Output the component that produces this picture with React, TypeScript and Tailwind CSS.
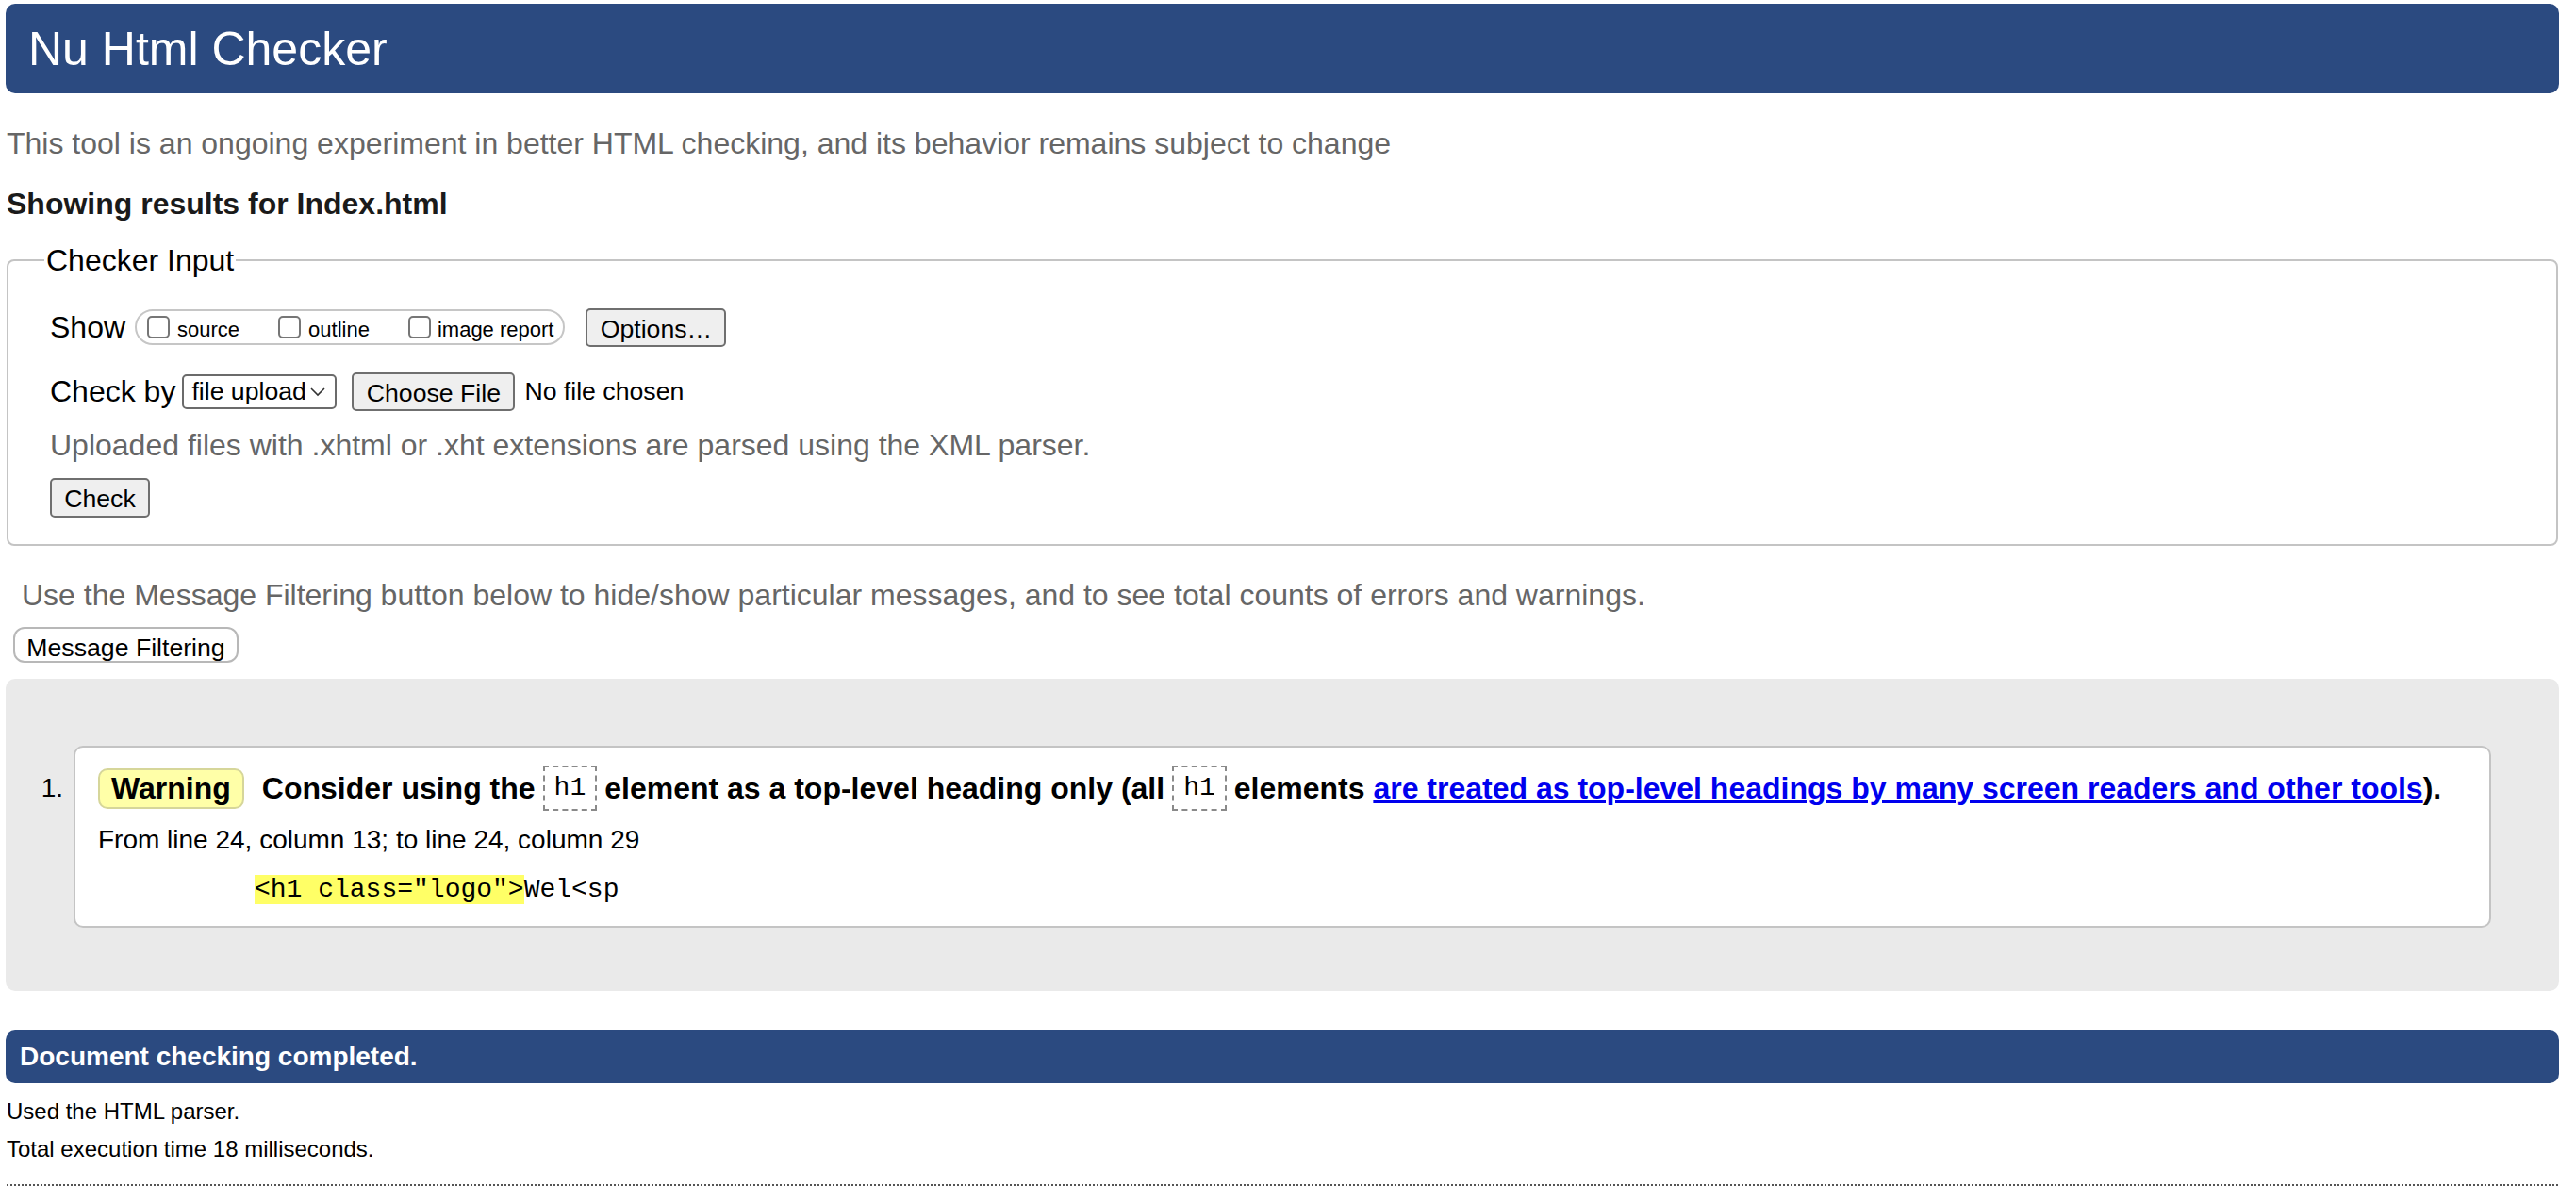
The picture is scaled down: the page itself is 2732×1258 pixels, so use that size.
import React from 'react';

// Small checkbox drawn as a box, like the native mac control
function Box() {
  return <span className="inline-block h-[24px] w-[24px] rounded-[5px] border-2 border-[#767676] bg-white" />;
}

function CodeBox({ children }: { children: React.ReactNode }) {
  return (
    <span className="ml-[8px] inline-flex h-[48px] items-center border-2 border-dashed border-[#8a8a8a] px-[10px] font-['Liberation_Mono','Courier_New',monospace] text-[28px] font-normal">
      {children}
    </span>
  );
}

export default function App() {
  return (
    <div className="min-h-screen bg-white font-['Liberation_Sans',Arial,Helvetica,sans-serif] text-black">
      <div className="ml-[6px] w-[2708px] pt-[4px]">
        {/* Title bar */}
        <header className="flex h-[95px] items-center rounded-[10px] bg-[#2b4a80] pl-[24px]">
          <h1 className="text-[50px] leading-none text-white">Nu Html Checker</h1>
        </header>

        <p className="mt-[33px] pl-[1px] text-[32px] leading-[40px] text-[#666]">
          This tool is an ongoing experiment in better HTML checking, and its behavior remains subject to change
        </p>
        <p className="mt-[24px] pl-[1px] text-[32px] font-bold leading-[40px] text-[#1a1a1a]">
          Showing results for Index.html
        </p>

        {/* Checker input form */}
        <fieldset className="mx-[1px] mt-[20px] rounded-[8px] border-2 border-[#c4c4c4]">
          <legend className="ml-[38px] px-[2px] text-[32px] leading-[40px]">Checker Input</legend>
          <div className="pb-[28px] pl-[44px] pt-[30px]">
            <div className="flex h-[42px] items-center">
              <span className="text-[32px]">Show</span>
              <div className="ml-[10px] flex h-[38px] items-center whitespace-nowrap rounded-full border-2 border-[#c6c6c6] pl-[11px] pr-[10px] text-[22px]">
                <label className="flex items-center">
                  <Box />
                  <span className="ml-[8px] mt-[4px]">source</span>
                </label>
                <label className="ml-[41px] flex items-center">
                  <Box />
                  <span className="ml-[8px] mt-[4px]">outline</span>
                </label>
                <label className="ml-[41px] flex items-center">
                  <Box />
                  <span className="ml-[7px] mt-[4px]">image report</span>
                </label>
              </div>
              <button className="ml-[22px] h-[41px] w-[149px] whitespace-nowrap rounded-[5px] border-2 border-[#6f6f6f] bg-[#efefef] text-[26.67px]">
                Options…
              </button>
            </div>

            <div className="mt-[26px] flex h-[42px] items-center whitespace-nowrap">
              <span className="text-[32px]">Check by</span>
              <div className="ml-[7px] flex h-[37px] w-[164px] shrink-0 items-center rounded-[5px] border-2 border-[#6b6b6b] bg-white pl-[8px] text-[26.67px]">
                <span className="whitespace-nowrap">file upload</span>
                <svg className="ml-auto mr-[9px] shrink-0" width="18" height="11" viewBox="0 0 18 11">
                  <polyline points="2,2 9,9 16,2" fill="none" stroke="#333" strokeWidth="1.6" />
                </svg>
              </div>
              <button className="ml-[16px] h-[41px] w-[173px] shrink-0 rounded-[5px] border-2 border-[#6f6f6f] bg-[#efefef] text-[26.67px]">
                Choose File
              </button>
              <span className="ml-[10px] text-[26.67px]">No file chosen</span>
            </div>

            <p className="mt-[16px] text-[32px] leading-[40px] text-[#666]">
              Uploaded files with .xhtml or .xht extensions are parsed using the XML parser.
            </p>

            <button className="mt-[15px] h-[42px] w-[106px] rounded-[5px] border-2 border-[#6f6f6f] bg-[#efefef] text-[26.67px]">
              Check
            </button>
          </div>
        </fieldset>

        <p className="mt-[32px] pl-[17px] text-[32px] leading-[40px] text-[#666]">
          Use the Message Filtering button below to hide/show particular messages, and to see total counts of errors and warnings.
        </p>
        <div className="mt-[14px] pl-[8px]">
          <button className="h-[38px] w-[239px] rounded-[12px] border-2 border-[#b8b8b8] bg-white text-[26.67px]">
            Message Filtering
          </button>
        </div>

        {/* Results */}
        <div className="mt-[17px] flex rounded-[10px] bg-[#eaeaea] pb-[67px] pt-[71px]">
          <div className="w-[72px] pr-[11px] pt-[21px]">
            <div className="flex h-[48px] items-center justify-end text-[28px]">1.</div>
          </div>
          <div className="mr-[72px] flex-1 rounded-[10px] border-2 border-[#c4c4c4] bg-white pb-[22px] pl-[24px] pt-[19px]">
            <div className="flex h-[48px] items-center whitespace-nowrap text-[32px] font-bold leading-[48px]">
              <span className="inline-flex h-[43px] items-center rounded-[10px] border-2 border-[#d6d69a] bg-[#ffffa8] px-[12px]">
                Warning
              </span>
              <span className="ml-[19px]">Consider using the</span>
              <CodeBox>h1</CodeBox>
              <span className="ml-[8px]">element as a top-level heading only (all</span>
              <CodeBox>h1</CodeBox>
              <span className="ml-[8px]">
                elements{' '}
                <a href="#" className="text-[#0000ee] underline">
                  are treated as top-level headings by many screen readers and other tools
                </a>
                ).
              </span>
            </div>
            <p className="mt-[13px] text-[28px] leading-[36px]">From line 24, column 13; to line 24, column 29</p>
            <p className="ml-[166px] mt-[19px] whitespace-pre font-['Liberation_Mono','Courier_New',monospace] text-[28px] leading-[32px]">
              <span className="bg-[#ffff66]">{'<h1 class="logo">'}</span>
              {'Wel<sp'}
            </p>
          </div>
        </div>

        <div className="mt-[42px] flex h-[56px] items-center rounded-[10px] bg-[#2b4a80] pl-[15px]">
          <span className="text-[28px] font-bold text-white">Document checking completed.</span>
        </div>
        <p className="mt-[10px] pl-[1px] text-[24px] leading-[40px]">Used the HTML parser.</p>
        <p className="pl-[1px] text-[24px] leading-[40px]">Total execution time 18 milliseconds.</p>
        <div className="mx-[1px] mt-[17px] border-t-2 border-dotted border-[#555]" />
      </div>
    </div>
  );
}
